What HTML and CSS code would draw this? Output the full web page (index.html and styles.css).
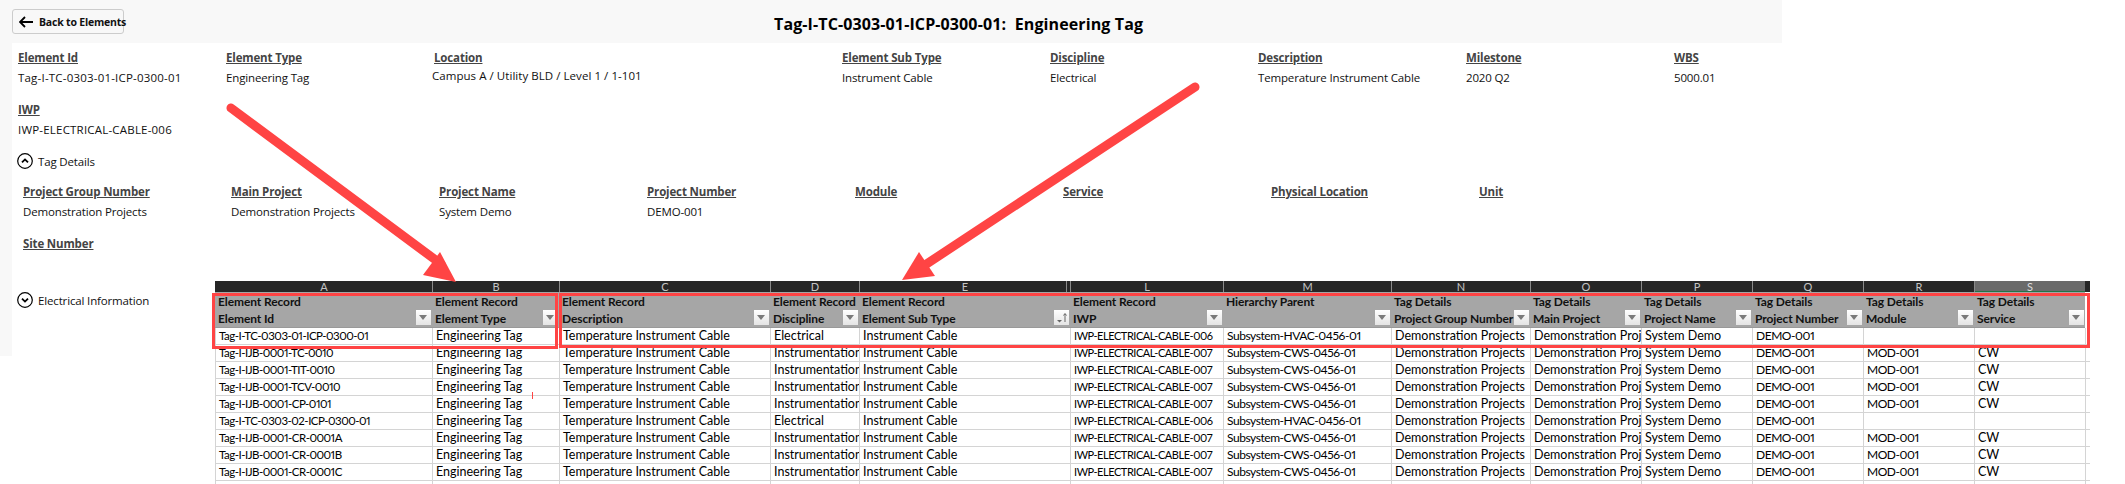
FILE: index.html
```html
<!DOCTYPE html>
<html lang="en">
<head>
<meta charset="utf-8">
<title>Engineering Tag</title>
<link rel="stylesheet" href="styles.css">
</head>
<body>
<div class="page">
  <header class="topbar">
    <button class="back" type="button">
      <svg class="back-icon" viewBox="0 0 14 12"><path d="M6 1 1 6l5 5M1 6h13" fill="none" stroke="#000" stroke-width="1.8"/></svg>
      Back to Elements
    </button>
    <h1 class="title">Tag-I-TC-0303-01-ICP-0300-01:&nbsp;&nbsp;Engineering Tag</h1>
  </header>
  <div class="body">
    <div class="strip"></div>
    <main class="content">
      <section class="fields fields-main">
        <div class="field"><div class="label">Element Id</div><div class="value value-code">Tag-I-TC-0303-01-ICP-0300-01</div></div>
        <div class="field"><div class="label">Element Type</div><div class="value">Engineering Tag</div></div>
        <div class="field"><div class="label">Location</div><div class="value value-location">Campus A / Utility BLD / Level 1 / 1-101</div></div>
        <div class="field"><div class="label">Element Sub Type</div><div class="value">Instrument Cable</div></div>
        <div class="field"><div class="label">Discipline</div><div class="value">Electrical</div></div>
        <div class="field"><div class="label">Description</div><div class="value">Temperature Instrument Cable</div></div>
        <div class="field"><div class="label">Milestone</div><div class="value">2020 Q2</div></div>
        <div class="field"><div class="label">WBS</div><div class="value">5000.01</div></div>
        <div class="field"><div class="label">IWP</div><div class="value value-code">IWP-ELECTRICAL-CABLE-006</div></div>
      </section>
      <div class="toggle">
        <svg class="toggle-icon" viewBox="0 0 16 16"><circle cx="8" cy="8" r="7.3" fill="none" stroke="#000" stroke-width="1.2"/><path d="M5 9.4 8 6.4l3 3" fill="none" stroke="#000" stroke-width="1.8"/></svg>
        <span>Tag Details</span>
      </div>
      <section class="fields fields-tag">
        <div class="field"><div class="label">Project Group Number</div><div class="value">Demonstration Projects</div></div>
        <div class="field"><div class="label">Main Project</div><div class="value">Demonstration Projects</div></div>
        <div class="field"><div class="label">Project Name</div><div class="value">System Demo</div></div>
        <div class="field"><div class="label">Project Number</div><div class="value">DEMO-001</div></div>
        <div class="field"><div class="label">Module</div><div class="value"></div></div>
        <div class="field"><div class="label">Service</div><div class="value"></div></div>
        <div class="field"><div class="label">Physical Location</div><div class="value"></div></div>
        <div class="field"><div class="label">Unit</div><div class="value"></div></div>
        <div class="field"><div class="label">Site Number</div><div class="value"></div></div>
      </section>
    </main>
  </div>
  <section class="electrical">
    <div class="toggle toggle-side">
      <svg class="toggle-icon" viewBox="0 0 16 16"><circle cx="8" cy="8" r="7.3" fill="none" stroke="#000" stroke-width="1.2"/><path d="M5 6.6 8 9.6l3-3" fill="none" stroke="#000" stroke-width="1.8"/></svg>
      <span>Electrical Information</span>
    </div>
    <table class="sheet">
      <colgroup>
        <col class="c217"><col class="c127"><col class="c211"><col class="c89"><col class="c211"><col class="c153"><col class="c168"><col class="c139"><col class="c111"><col class="c111"><col class="c111"><col class="c111"><col class="c111"><col class="c5">
      </colgroup>
      <thead>
        <tr class="letters">
          <th>A</th><th>B</th><th>C</th><th>D</th><th class="hidden-after">E</th><th>L</th><th>M</th><th>N</th><th>O</th><th>P</th><th>Q</th><th>R</th><th class="active">S</th><th class="tail"></th>
        </tr>
        <tr class="heads">
          <th>Element Record<br>Element Id<i class="filter"></i></th>
          <th>Element Record<br>Element Type<i class="filter"></i></th>
          <th>Element Record<br>Description<i class="filter"></i></th>
          <th>Element Record<br>Discipline<i class="filter"></i></th>
          <th>Element Record<br>Element Sub Type<i class="filter filter-sorted"><svg class="sort-icon" viewBox="0 0 15 15"><path d="M3 10h5l-2.500 2.500z" fill="#666"/><path d="M11 12V4M9.500 5.500 11 3.500l1.500 2" fill="none" stroke="#666"/></svg></i></th>
          <th>Element Record<br>IWP<i class="filter"></i></th>
          <th>Hierarchy Parent<br>&nbsp;<i class="filter"></i></th>
          <th>Tag Details<br>Project Group Number<i class="filter"></i></th>
          <th>Tag Details<br>Main Project<i class="filter"></i></th>
          <th>Tag Details<br>Project Name<i class="filter"></i></th>
          <th>Tag Details<br>Project Number<i class="filter"></i></th>
          <th>Tag Details<br>Module<i class="filter"></i></th>
          <th>Tag Details<br>Service<i class="filter"></i></th>
          <th class="tail-head"></th>
        </tr>
      </thead>
      <tbody>
        <tr><td>Tag-I-TC-0303-01-ICP-0300-01</td><td>Engineering Tag</td><td>Temperature Instrument Cable</td><td>Electrical</td><td>Instrument Cable</td><td>IWP-ELECTRICAL-CABLE-006</td><td>Subsystem-HVAC-0456-01</td><td>Demonstration Projects</td><td>Demonstration Projects</td><td>System Demo</td><td>DEMO-001</td><td></td><td></td><td></td></tr>
        <tr><td>Tag-I-IJB-0001-TC-0010</td><td>Engineering Tag</td><td>Temperature Instrument Cable</td><td>Instrumentation</td><td>Instrument Cable</td><td>IWP-ELECTRICAL-CABLE-007</td><td>Subsystem-CWS-0456-01</td><td>Demonstration Projects</td><td>Demonstration Projects</td><td>System Demo</td><td>DEMO-001</td><td>MOD-001</td><td>CW</td><td></td></tr>
        <tr><td>Tag-I-IJB-0001-TIT-0010</td><td>Engineering Tag</td><td>Temperature Instrument Cable</td><td>Instrumentation</td><td>Instrument Cable</td><td>IWP-ELECTRICAL-CABLE-007</td><td>Subsystem-CWS-0456-01</td><td>Demonstration Projects</td><td>Demonstration Projects</td><td>System Demo</td><td>DEMO-001</td><td>MOD-001</td><td>CW</td><td></td></tr>
        <tr><td>Tag-I-IJB-0001-TCV-0010</td><td>Engineering Tag</td><td>Temperature Instrument Cable</td><td>Instrumentation</td><td>Instrument Cable</td><td>IWP-ELECTRICAL-CABLE-007</td><td>Subsystem-CWS-0456-01</td><td>Demonstration Projects</td><td>Demonstration Projects</td><td>System Demo</td><td>DEMO-001</td><td>MOD-001</td><td>CW</td><td></td></tr>
        <tr><td>Tag-I-IJB-0001-CP-0101</td><td>Engineering Tag</td><td>Temperature Instrument Cable</td><td>Instrumentation</td><td>Instrument Cable</td><td>IWP-ELECTRICAL-CABLE-007</td><td>Subsystem-CWS-0456-01</td><td>Demonstration Projects</td><td>Demonstration Projects</td><td>System Demo</td><td>DEMO-001</td><td>MOD-001</td><td>CW</td><td></td></tr>
        <tr><td>Tag-I-TC-0303-02-ICP-0300-01</td><td>Engineering Tag</td><td>Temperature Instrument Cable</td><td>Electrical</td><td>Instrument Cable</td><td>IWP-ELECTRICAL-CABLE-006</td><td>Subsystem-HVAC-0456-01</td><td>Demonstration Projects</td><td>Demonstration Projects</td><td>System Demo</td><td>DEMO-001</td><td></td><td></td><td></td></tr>
        <tr><td>Tag-I-IJB-0001-CR-0001A</td><td>Engineering Tag</td><td>Temperature Instrument Cable</td><td>Instrumentation</td><td>Instrument Cable</td><td>IWP-ELECTRICAL-CABLE-007</td><td>Subsystem-CWS-0456-01</td><td>Demonstration Projects</td><td>Demonstration Projects</td><td>System Demo</td><td>DEMO-001</td><td>MOD-001</td><td>CW</td><td></td></tr>
        <tr><td>Tag-I-IJB-0001-CR-0001B</td><td>Engineering Tag</td><td>Temperature Instrument Cable</td><td>Instrumentation</td><td>Instrument Cable</td><td>IWP-ELECTRICAL-CABLE-007</td><td>Subsystem-CWS-0456-01</td><td>Demonstration Projects</td><td>Demonstration Projects</td><td>System Demo</td><td>DEMO-001</td><td>MOD-001</td><td>CW</td><td></td></tr>
        <tr><td>Tag-I-IJB-0001-CR-0001C</td><td>Engineering Tag</td><td>Temperature Instrument Cable</td><td>Instrumentation</td><td>Instrument Cable</td><td>IWP-ELECTRICAL-CABLE-007</td><td>Subsystem-CWS-0456-01</td><td>Demonstration Projects</td><td>Demonstration Projects</td><td>System Demo</td><td>DEMO-001</td><td>MOD-001</td><td>CW</td><td></td></tr>
        <tr><td></td><td></td><td></td><td></td><td></td><td></td><td></td><td></td><td></td><td></td><td></td><td></td><td></td><td></td></tr>
      </tbody>
    </table>
  </section>
  <svg class="annotations" viewBox="0 0 2125 484">
    <path class="arrow-line" d="M231 108 441 264"/>
    <path class="arrow-head" d="M456 282 440 252 423 275z"/>
    <path class="arrow-line" d="M1195 87 925 265"/>
    <path class="arrow-head" d="M902 280 919 252 935 276z"/>
    <rect class="box" x="213.500" y="294.500" width="343" height="53"/>
    <rect class="box" x="560.500" y="294.500" width="1528" height="52"/>
    <path class="tick" d="M532.500 392v7"/>
  </svg>
</div>
</body>
</html>
```
FILE: styles.css
```css
* { box-sizing: border-box; }
html, body { margin: 0; padding: 0; background: #fff; }
.page {
  position: relative;
  width: 2125px;
  height: 484px;
  overflow: hidden;
  font-family: "Open Sans", "Noto Sans", sans-serif;
  font-size: 12px;
  color: #111;
}
.topbar {
  display: flex;
  align-items: flex-start;
  width: 1782px;
  height: 43px;
  padding: 9px 0 0 12px;
  background: #f8f8f8;
}
.back {
  display: flex;
  align-items: center;
  gap: 6px;
  width: 112px;
  height: 25px;
  padding: 0 0 0 6px;
  border: 1px solid #ccc;
  border-radius: 3px;
  background: #f8f8f8;
  font: 700 10.500px "Open Sans", sans-serif;
  letter-spacing: -0.2px;
  color: #111;
  white-space: nowrap;
}
.back-icon { width: 14px; height: 12px; flex: none; }
.title {
  margin: 0 0 0 650px;
  font-size: 16px;
  line-height: 30px;
  font-weight: 700;
  color: #000;
  white-space: nowrap;
  letter-spacing: 0.12px;
}
.body { display: flex; height: 238px; }
.strip { flex: none; width: 12px; height: 313px; background: #f8f8f8; }
.content { flex: 1; padding-top: 5px; }
.fields { display: grid; row-gap: 12px; }
.fields-main {
  padding-left: 6px;
  grid-template-columns: 208px 208px 408px repeat(5, 208px);
}
.fields-tag {
  margin-top: 11px;
  padding-left: 11px;
  grid-template-columns: repeat(8, 208px);
}
.field { height: 40px; line-height: 20px; white-space: nowrap; }
.label {
  font-weight: 700;
  color: #444;
  text-decoration: underline;
  font-size: 11.500px;
  letter-spacing: -0.15px;
}
.value { font-size: 11.500px; letter-spacing: -0.15px; color: #111; }
.value-code { letter-spacing: 0.2px; }
.value-location { margin: -2px 0 0 -2px; letter-spacing: 0.05px; }
.toggle {
  display: flex;
  align-items: center;
  gap: 5px;
  height: 20px;
  margin: 11px 0 0 5px;
  font-size: 11.500px;
  letter-spacing: -0.15px;
}
.toggle-icon { width: 16px; height: 16px; flex: none; }
.electrical {
  display: flex;
  align-items: flex-start;
}
.toggle-side {
  flex: none;
  width: 215px;
  margin: 9px 0 0;
  padding-left: 17px;
}
.sheet {
  flex: none;
  width: 1875px;
  table-layout: fixed;
  border-collapse: separate;
  border-spacing: 0;
  font-family: Lato, "Open Sans", sans-serif;
  font-size: 12.500px;
  color: #000;
}
.c217 { width: 217px; }
.c127 { width: 127px; }
.c211 { width: 211px; }
.c89 { width: 89px; }
.c153 { width: 153px; }
.c168 { width: 168px; }
.c139 { width: 139px; }
.c111 { width: 111px; }
.c5 { width: 5px; }
.letters th {
  height: 11px;
  padding: 0;
  overflow: hidden;
  background: #262626;
  border-left: 1px solid #8a8a8a;
  color: #c4c4c4;
  font-size: 11px;
  line-height: 11px;
  font-weight: 400;
  text-align: center;
}
.letters th:first-child { border-left-color: #262626; }
.letters .hidden-after { box-shadow: inset -3px 0 #262626, inset -4px 0 #8a8a8a; }
.letters .active {
  background: #6a6a6a;
  box-shadow: inset 0 -1px #217346;
  color: #ddd;
}
.letters .tail { border-left-color: #262626; }
.heads th {
  position: relative;
  height: 35px;
  padding: 1px 0 0 3px;
  overflow: hidden;
  background: #a6a6a6;
  border-bottom: 1px solid #999;
  color: #111;
  font-size: 12px;
  line-height: 17px;
  font-weight: 700;
  text-align: left;
  white-space: nowrap;
  letter-spacing: -0.1px;
}
.heads .tail-head { background: #fff; border-bottom: 0; padding: 0; }
.filter {
  position: absolute;
  right: 1px;
  bottom: 2px;
  width: 15px;
  height: 15px;
  background: linear-gradient(#fff, #e4e4e4);
}
.filter::after {
  content: "";
  position: absolute;
  left: 3px;
  top: 5px;
  border: 4.500px solid transparent;
  border-top: 5px solid #7a7a7a;
  border-bottom: 0;
}
.filter-sorted::after { display: none; }
.sort-icon { display: block; width: 15px; height: 15px; }
tbody td {
  height: 17px;
  padding: 0 0 0 3px;
  overflow: hidden;
  border-left: 1px solid #d4d4d4;
  border-bottom: 1px solid #d4d4d4;
  line-height: 16px;
  white-space: nowrap;
  font-feature-settings: "pnum";
}
tbody td:nth-child(1) {
  font-size: 11.500px;
  letter-spacing: -0.5px;
}
tbody td:nth-child(6) {
  font-size: 11px;
  letter-spacing: -0.45px;
}
tbody td:nth-child(7),
tbody td:nth-child(11),
tbody td:nth-child(12) {
  font-size: 12px;
  letter-spacing: -0.45px;
}
.annotations {
  position: absolute;
  left: 0;
  top: 0;
  width: 2125px;
  height: 484px;
  pointer-events: none;
}
.arrow-line { fill: none; stroke: #ff4444; stroke-width: 9; stroke-linecap: round; }
.arrow-head { fill: #ff4444; }
.box { fill: none; stroke: #ff4444; stroke-width: 3; }
.tick { stroke: #ff4444; stroke-width: 1; }
```
